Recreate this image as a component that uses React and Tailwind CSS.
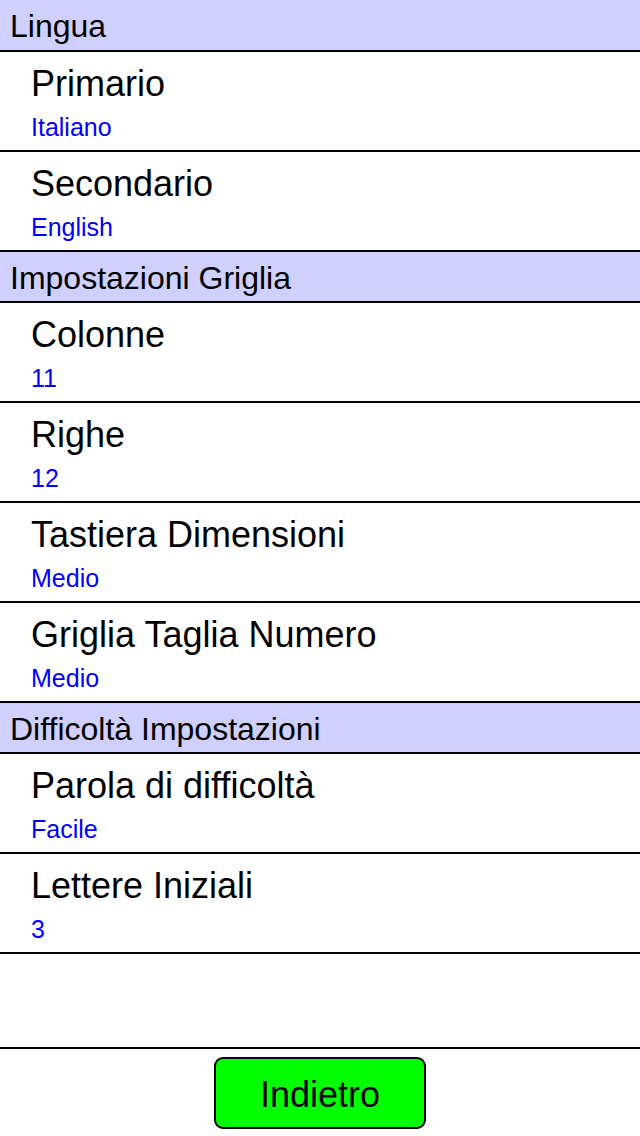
import React from "react";

const font = { fontFamily: '"Liberation Sans", Arial, Helvetica, sans-serif' };

function Header({ children, h = "h-[52px]" }) {
  return (
    <div className={`${h} bg-[#d0d0ff] border-b-2 border-black pl-[10px] pt-[2px] text-[32px] leading-[48px] text-black`}>
      {children}
    </div>
  );
}

function Row({ title, value }) {
  return (
    <div className="h-[100px] border-b-2 border-black pl-[31px] pt-[14px] flex flex-col">
      <div className="text-[36px] leading-[36px] text-black">{title}</div>
      <div className="mt-[13px] text-[25px] leading-[25px] text-[#0000ff]">{value}</div>
    </div>
  );
}

export default function App() {
  return (
    <div className="w-[640px] h-[1136px] bg-white flex flex-col overflow-hidden" style={font}>
      <Header>Lingua</Header>
      <Row title="Primario" value="Italiano" />
      <Row title="Secondario" value="English" />
      <Header h="h-[51px]">Impostazioni Griglia</Header>
      <Row title="Colonne" value="11" />
      <Row title="Righe" value="12" />
      <Row title="Tastiera Dimensioni" value="Medio" />
      <Row title="Griglia Taglia Numero" value="Medio" />
      <Header h="h-[51px]">Difficoltà Impostazioni</Header>
      <Row title="Parola di difficoltà" value="Facile" />
      <Row title="Lettere Iniziali" value="3" />
      <div className="flex-1 border-b-2 border-black" />
      <div className="h-[87px] flex justify-center pt-[8px]">
        <button className="w-[212px] h-[72px] pt-[4px] bg-[#00ff00] border-2 border-black rounded-[9px] text-[36px] text-black leading-none flex items-center justify-center" style={font}>
          Indietro
        </button>
      </div>
    </div>
  );
}
